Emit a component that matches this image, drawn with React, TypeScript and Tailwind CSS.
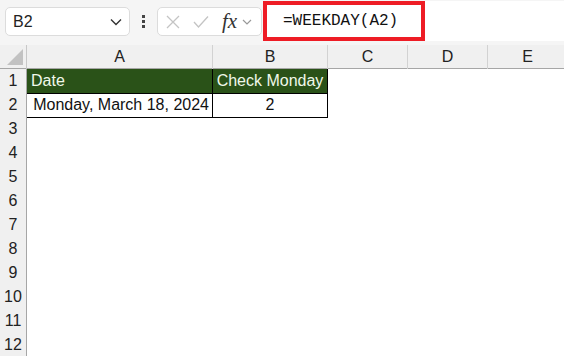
import React from "react";

const font = { fontFamily: '"Liberation Sans", Arial, sans-serif' };

const cols = ["A", "B", "C", "D", "E"];
const gridCols = "grid grid-cols-[27px_186px_115px_80px_80px_80px]";

function RowHead({ n }: { n: number }) {
  return (
    <div className="flex items-center justify-center border-r border-b border-r-[#a6a6a6] border-b-[#bdbdbd] bg-[#f0f0f0] text-[16px] text-[#222]">
      {n}
    </div>
  );
}

export default function App() {
  const empty = Array.from({ length: 10 }, (_, i) => i + 3);

  return (
    <div className="h-[356px] w-[564px] overflow-hidden bg-white" style={font}>
      {/* formula bar */}
      <div className="flex h-[45px] items-start bg-[#f5f5f5] pl-[5px]">
        <div className="mt-[7px] flex h-[29px] w-[125px] items-center justify-between rounded-[5px] border border-[#dcdcdc] bg-white pl-[7px] pr-[7px]">
          <span className="text-[16px] text-[#222]">B2</span>
          <svg width="12" height="8" viewBox="0 0 12 8" fill="none" stroke="#333" strokeWidth="1.4">
            <path d="M1 1.5 L6 6.5 L11 1.5" />
          </svg>
        </div>
        <div className="mt-[15px] flex w-[27px] flex-col items-center gap-[2px]">
          <span className="h-[3px] w-[3px] bg-[#444]" />
          <span className="h-[3px] w-[3px] bg-[#444]" />
          <span className="h-[3px] w-[3px] bg-[#444]" />
        </div>
        <div className="mt-[7px] flex h-[29px] w-[105px] items-center rounded-[5px] border border-[#dcdcdc] bg-white pl-[7px]">
          <svg width="16" height="16" viewBox="0 0 16 16" fill="none" stroke="#c4c4c4" strokeWidth="1.3">
            <path d="M2 2 L14 14 M14 2 L2 14" />
          </svg>
          <svg className="ml-[12px]" width="16" height="14" viewBox="0 0 16 14" fill="none" stroke="#c4c4c4" strokeWidth="1.3">
            <path d="M1 7 L5.5 12 L15 1.5" />
          </svg>
          <span
            className="ml-[13px] text-[21px] italic leading-none text-[#333]"
            style={{ fontFamily: '"Liberation Serif", "Times New Roman", serif' }}
          >
            fx
          </span>
          <svg className="ml-[5px]" width="10" height="6" viewBox="0 0 10 6" fill="none" stroke="#999" strokeWidth="1.2">
            <path d="M1 1 L5 5 L9 1" />
          </svg>
        </div>
        <div className="ml-[1px] mt-[1px] flex h-[40px] w-[162px] items-center border-[4px] border-[#ee1c25] bg-white pl-[16px]">
          <span
            className="text-[16px] text-[#111]"
            style={{ fontFamily: '"Liberation Mono", "Courier New", monospace' }}
          >
            =WEEKDAY(A2)
          </span>
        </div>
        <div className="mt-[1px] h-[40px] flex-1 bg-white" />
      </div>

      {/* column headers */}
      <div className={`${gridCols} h-[24px] border-b border-[#a6a6a6] bg-[#f0f0f0]`}>
        <div className="relative border-r border-[#c8c8c8]">
          <svg className="absolute bottom-[4px] right-[3px]" width="16" height="16" viewBox="0 0 16 16">
            <path d="M16 0 L16 16 L0 16 Z" fill="#c2c2c2" />
          </svg>
        </div>
        {cols.map((c) => (
          <div key={c} className="flex items-center justify-center border-r border-[#d2d2d2] text-[16px] text-[#222]">
            {c}
          </div>
        ))}
      </div>

      {/* row 1 */}
      <div className={`${gridCols} h-[24px]`}>
        <RowHead n={1} />
        <div className="flex items-center border-r border-b border-black bg-[#2a5218] pl-[4px] text-[16px] text-[#f0f8ea]">
          Date
        </div>
        <div className="flex items-center justify-center border-r border-b border-black bg-[#2a5218] text-[16px] text-[#f0f8ea]">
          Check Monday
        </div>
        <div />
        <div />
        <div />
      </div>

      {/* row 2 */}
      <div className={`${gridCols} h-[24px]`}>
        <RowHead n={2} />
        <div className="flex items-center justify-end border-r border-b border-black pr-[3px] text-[16px] text-[#111]">
          Monday, March 18, 2024
        </div>
        <div className="flex items-center justify-center border-r border-b border-black text-[16px] text-[#111]">
          2
        </div>
        <div />
        <div />
        <div />
      </div>

      {empty.map((n) => (
        <div key={n} className={`${gridCols} h-[24px]`}>
          <RowHead n={n} />
          <div />
          <div />
          <div />
          <div />
          <div />
        </div>
      ))}
    </div>
  );
}
